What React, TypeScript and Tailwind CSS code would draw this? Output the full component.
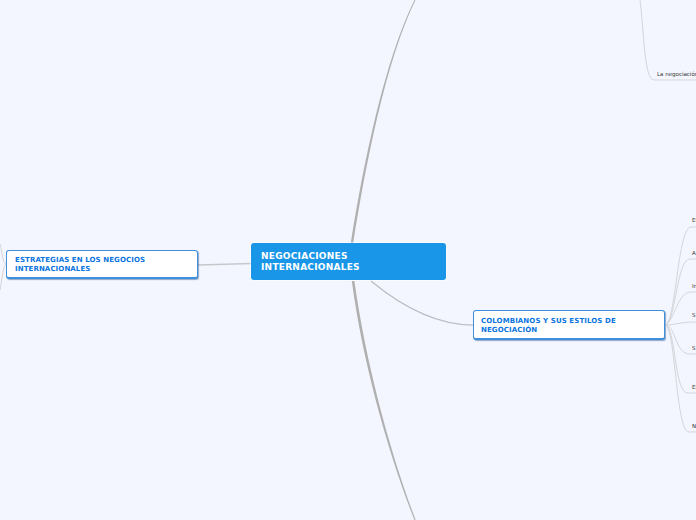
import React from 'react';

const leaves = [
  { label: 'El', top: 216, left: 692 },
  { label: 'A', top: 249, left: 692 },
  { label: 'In', top: 282, left: 692 },
  { label: 'S', top: 311, left: 692 },
  { label: 'S', top: 344, left: 692 },
  { label: 'El', top: 383, left: 692 },
  { label: 'N', top: 422, left: 692 },
  { label: 'La negociación', top: 70, left: 657 },
];

const branches = [
  'M666 325 C676 318 678 227 691 227 L696 227',
  'M666 325 C676 318 677 259 690 259 L696 259',
  'M666 325 C674 320 678 292 691 292 L696 292',
  'M666 325 C674 325 680 322 696 322',
  'M666 325 C676 327 675 354 690 354 L696 354',
  'M666 325 C676 330 674 393 688 393 L696 393',
  'M666 325 C676 335 676 432 689 432 L696 432',
  'M640 0 C644 30 644 80 654 80 L696 80',
  'M6 264 C2 262 2 250 0 244',
  'M6 264 C3 266 2 280 0 290',
];

const App = () => {
  return (
    <div className="relative w-[696px] h-[520px] overflow-hidden bg-[#f3f6fe] font-['DejaVu_Sans',sans-serif]">
      <svg className="absolute inset-0" width="696" height="520" fill="none">
        {/* main branches get thinner away from the centre */}
        <path d="M350.8 243 C363 165 384.5 60 414.5 0 L415.5 0 C386 60 365.5 165 353.2 243 Z" fill="#b0b0b0" />
        <path d="M351.8 281 C363 365 389 455 414.4 520 L415.6 520 C391 455 366 365 354.4 281 Z" fill="#b0b0b0" />
        <path d="M371 281 C400 305 435 325 473 325" stroke="#bcbcc2" strokeWidth="1.25" />
        <path d="M198 265 L251 263.5" stroke="#c8c8cc" strokeWidth="1.5" />
        {branches.map((d, index) => (
          <path key={index} d={d} stroke="#d4d5da" strokeWidth="1" />
        ))}
      </svg>

      {leaves.map((leaf, index) => (
        <div
          key={index}
          className="absolute text-[5.5px] leading-[8px] whitespace-nowrap text-[#333]"
          style={{ top: leaf.top, left: leaf.left }}
        >
          {leaf.label}
        </div>
      ))}

      <div className="absolute left-[251px] top-[243px] w-[195px] h-[37px] rounded-[3px] bg-[#1a96e8] ring-1 ring-white/50 pl-[10px] pt-[8px] text-[9px] leading-[11px] font-bold tracking-[0.25px] text-white">
        NEGOCIACIONES<br />INTERNACIONALES
      </div>

      <div className="absolute left-[6px] top-[250px] w-[192px] h-[29px] rounded-[3px] border border-b-2 border-[#3f8fdc] bg-white pl-[8px] pt-[5px] text-[7px] leading-[9px] font-bold tracking-[0.1px] text-[#0a74e0] shadow-[1px_1px_1px_rgba(40,90,150,0.5)]">
        ESTRATEGIAS EN LOS NEGOCIOS<br />INTERNACIONALES
      </div>

      <div className="absolute left-[473px] top-[310px] w-[192px] h-[30px] rounded-[3px] border border-b-2 border-[#3f8fdc] bg-white pl-[7px] pt-[6px] text-[7px] leading-[9px] font-bold tracking-[0.1px] text-[#0a74e0] shadow-[1px_1px_1px_rgba(40,90,150,0.5)]">
        COLOMBIANOS Y SUS ESTILOS DE<br />NEGOCIACIÓN
      </div>
    </div>
  );
};

export default App;
